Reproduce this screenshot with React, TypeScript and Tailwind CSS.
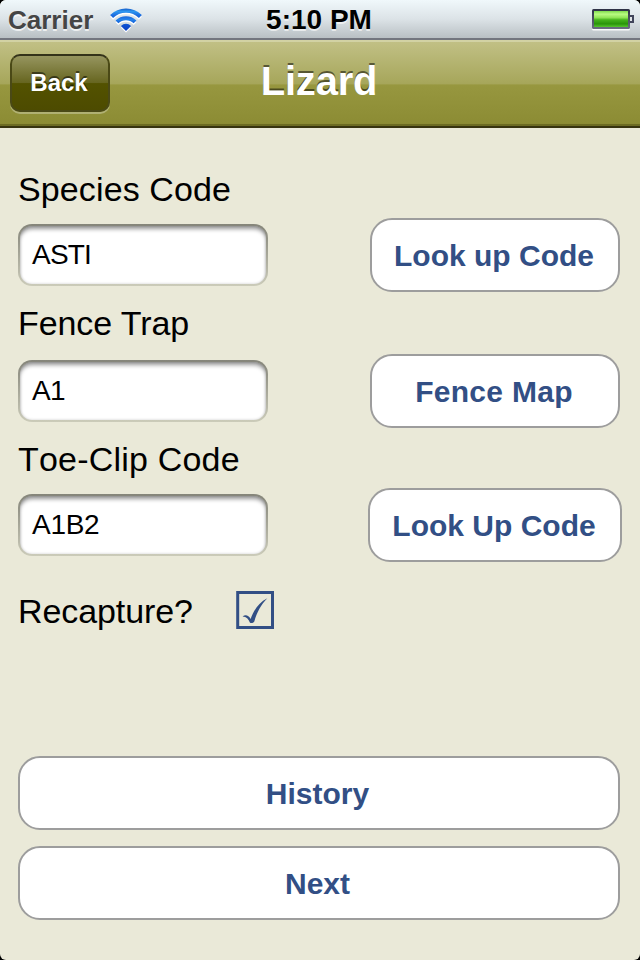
import React from "react";

function WifiIcon() {
  return (
    <svg width="34" height="27" viewBox="0 0 34 27" fill="none">
      <defs>
        <linearGradient id="wifi" x1="0" y1="1" x2="0" y2="24" gradientUnits="userSpaceOnUse">
          <stop offset="0" stopColor="#0f52c4" />
          <stop offset="0.15" stopColor="#2d97f0" />
          <stop offset="0.35" stopColor="#1a66dc" />
          <stop offset="0.5" stopColor="#2482ea" />
          <stop offset="0.75" stopColor="#0d4fd0" />
          <stop offset="1" stopColor="#0a40c4" />
        </linearGradient>
      </defs>
      <g transform="translate(0 1.6)" stroke="#fff" fill="#fff">
        <path d="M2.6 9.6A20.400 20.400 0 0 1 31.400 9.600" strokeWidth="4.200" fill="none" />
        <path d="M7.950 14.950A12.800 12.800 0 0 1 26.050 14.950" strokeWidth="4" fill="none" />
        <path d="M11.900 18.900A7.200 7.200 0 0 1 22.100 18.900L17 24z" stroke="none" />
      </g>
      <path d="M2.600 9.600A20.400 20.400 0 0 1 31.400 9.600" stroke="url(#wifi)" strokeWidth="4.200" />
      <path d="M7.950 14.950A12.800 12.800 0 0 1 26.050 14.950" stroke="url(#wifi)" strokeWidth="4" />
      <path d="M11.900 18.900A7.200 7.200 0 0 1 22.100 18.900L17 24z" fill="url(#wifi)" />
    </svg>
  );
}

function BatteryIcon() {
  return (
    <svg width="42" height="22" viewBox="0 0 42 22">
      <defs>
        <linearGradient id="charge" x1="0" y1="0" x2="0" y2="1">
          <stop offset="0" stopColor="#7fdc4c" />
          <stop offset="0.2" stopColor="#b9fb82" />
          <stop offset="0.42" stopColor="#8fe455" />
          <stop offset="0.55" stopColor="#46b41c" />
          <stop offset="0.8" stopColor="#2a940a" />
          <stop offset="1" stopColor="#55c52c" />
        </linearGradient>
        <linearGradient id="case" x1="0" y1="0" x2="0" y2="1">
          <stop offset="0" stopColor="#2d3145" />
          <stop offset="1" stopColor="#6b6d80" />
        </linearGradient>
      </defs>
      <rect x="0" y="2.500" width="38" height="19" rx="1.500" fill="#fff" fillOpacity="0.9" />
      <rect x="0" y="0" width="38" height="20" rx="1.500" fill="url(#case)" />
      <rect x="2" y="2" width="34" height="16" fill="url(#charge)" />
      <path d="M38 7h3v6h-3" fill="#dfe3e6" stroke="#40445a" strokeWidth="2" />
    </svg>
  );
}

function StatusBar() {
  return (
    <div className="grid h-10 grid-cols-3 border-b-2 border-[#73767f] bg-linear-to-b from-[#f0f8fb] via-[#dce3e7] to-[#b9c0c4] pl-2 pr-1.5 font-bold">
      <div className="flex h-10 items-center gap-4 text-[26px] leading-10 text-[#454545] [text-shadow:0_2px_0_rgba(255,255,255,0.7)]">
        <span>Carrier</span>
        <WifiIcon />
      </div>
      <div className="-ml-1 h-10 text-center text-[28px] leading-[39px] text-black [text-shadow:0_2px_0_rgba(255,255,255,0.6)]">
        5:10 PM
      </div>
      <div className="flex h-10 items-center justify-end">
        <BatteryIcon />
      </div>
    </div>
  );
}

function NavBar() {
  return (
    <div className="grid h-[88px] grid-cols-[100px_1fr_100px] border-t-2 border-b-2 border-t-[#d2d2a4] border-b-[#37340f] bg-[linear-gradient(to_bottom,#c1c085_0%,#a6a65a_50%,#97973f_51%,#8c8c34_97%,#6c6b22_98%)] px-[10px]">
      <button className="mt-3 h-[58px] rounded-[10px] border-2 border-[#4a4916] border-t-[#34331a] bg-[linear-gradient(to_bottom,#96955f_0%,#66651f_50%,#535200_51%,#4d4b00_100%)] pr-0.5 text-2xl leading-[54px] font-bold text-white shadow-[0_2px_0_rgba(255,255,255,0.3)] [text-shadow:0_-2px_0_rgba(0,0,0,0.5)]">
        Back
      </button>
      <h1 className="-ml-0.5 text-center text-[40px] leading-[79px] font-bold tracking-[-0.2px] text-white [text-shadow:0_-2px_0_rgba(0,0,0,0.5)]">
        Lizard
      </h1>
    </div>
  );
}

type FieldProps = {
  label: string;
  labelClass: string;
  value: string;
  valueClass?: string;
  action: string;
  actionClass: string;
};

function Field({ label, labelClass, value, valueClass = "", action, actionClass }: FieldProps) {
  return (
    <>
      <label className={"block h-[42px] text-[34px] leading-[42px] " + labelClass}>{label}</label>
      <div className="flex items-center justify-between">
        <div className="h-[62px] w-[250px] rounded-[14px] bg-linear-to-b from-[#85857a] to-[#cbcbb9] p-0.5">
          <div
            className={
              "h-[58px] rounded-xl bg-white px-3 text-[28px] leading-[57px] shadow-[inset_0_4px_4px_-1px_rgba(0,0,0,0.4),inset_0_0_3px_rgba(0,0,0,0.2)] " +
              valueClass
            }
          >
            {value}
          </div>
        </div>
        <button
          className={
            "h-[74px] rounded-[22px] border-2 border-[#9d9d9d] bg-white pr-0.5 text-[30px] leading-[71px] font-bold text-[#324f85] " +
            actionClass
          }
        >
          {action}
        </button>
      </div>
    </>
  );
}

function Checkbox() {
  return (
    <svg width="38" height="38" viewBox="0 0 38 38">
      <rect x="1.700" y="1.500" width="34.800" height="35" fill="none" stroke="#324f85" strokeWidth="3" />
      <path
        d="M6.600 25.400C9 23.400 12.600 23.800 14.600 28C17.500 20 22.500 11.500 31.300 7.200C25 13.500 21 21 18.300 30.500C17 32.200 15.500 32.500 14 31.700C12.500 27.800 10.500 25.800 6.600 25.400Z"
        fill="#324f85"
      />
    </svg>
  );
}

export default function App() {
  return (
    <div className="h-[960px] w-[640px] overflow-hidden bg-black font-['Liberation_Sans',Arial,sans-serif]">
      <div className="flex h-full flex-col overflow-hidden rounded-[6px] bg-[#eae9d8] text-black">
        <StatusBar />
        <NavBar />
        <main className="flex flex-1 flex-col pt-10 pr-5 pb-10 pl-[18px]">
          <div className="flex flex-col gap-2">
            <Field
              label="Species Code"
              labelClass="tracking-[0.12px]"
              value="ASTI"
              valueClass="tracking-[-0.8px]"
              action="Look up Code"
              actionClass="w-[250px]"
            />
          </div>
          <div className="mt-2.5 flex flex-col gap-2.5">
            <Field
              label="Fence Trap"
              labelClass="tracking-[-0.08px]"
              value="A1"
              valueClass="tracking-[-0.8px]"
              action="Fence Map"
              actionClass="w-[250px] tracking-[0.3px]"
            />
          </div>
          <div className="mt-2.5 flex flex-col gap-2">
            <Field
              label="Toe-Clip Code"
              labelClass="tracking-[0.2px] [font-kerning:none]"
              value="A1B2"
              valueClass="tracking-[-0.3px]"
              action="Look Up Code"
              actionClass="-mr-0.5 w-[254px]"
            />
          </div>
          <div className="mt-7 flex h-10 items-center">
            <span className="w-[218px] pt-px text-[34px] leading-[42px] tracking-[-0.1px]">Recapture?</span>
            <Checkbox />
          </div>
          <div className="mt-auto flex flex-col gap-4">
            {["History", "Next"].map((name) => (
              <button
                key={name}
                className="h-[74px] w-full rounded-[22px] border-2 border-[#9d9d9d] bg-white pr-[3px] text-[30px] leading-[71px] font-bold text-[#324f85]"
              >
                {name}
              </button>
            ))}
          </div>
        </main>
      </div>
    </div>
  );
}
